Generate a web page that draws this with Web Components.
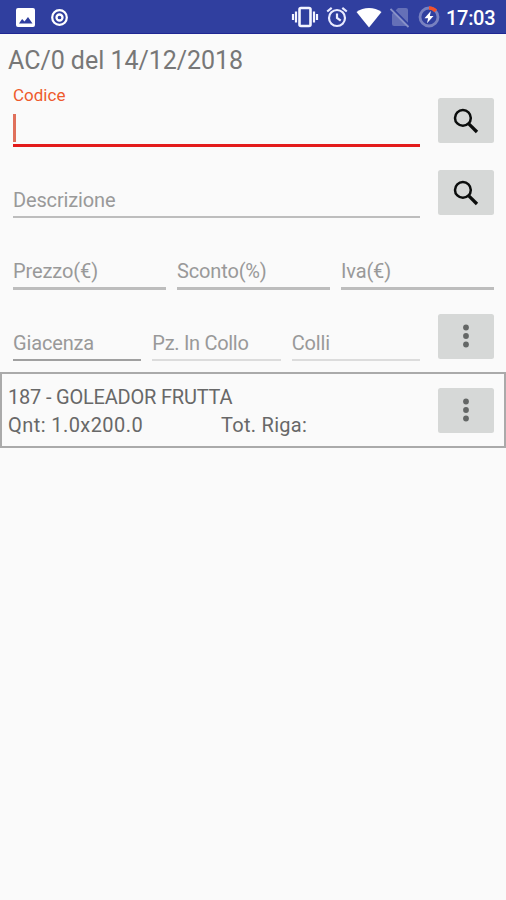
<!DOCTYPE html>
<html lang="it">
<head>
<meta charset="utf-8">
<title>AC/0 del 14/12/2018</title>
<style>
html,body{margin:0;height:100%;background:#fafafa;overflow:hidden}
body{font-family:Roboto,"Liberation Sans",sans-serif}
</style>
</head>
<body>
<order-app></order-app>
<script>
const define = (name, html) => customElements.define(name, class extends HTMLElement {
  constructor() {
    super();
    const t = document.createElement('template');
    t.innerHTML = html;
    this.attachShadow({ mode: 'open' }).append(t.content.cloneNode(true));
  }
});

define('status-bar', `
<style>
:host{display:flex;align-items:center;justify-content:space-between;height:34px;box-sizing:border-box;background:#303f9f;border-bottom:1.5px solid #1f2793;color:#fff;padding:1px 11px 0 15px}
svg{display:block;flex:none}
.l,.r{display:flex;align-items:center}
.l{gap:14px}
time{font-size:20px;font-weight:500;line-height:32px;padding-top:1px;letter-spacing:-.3px;width:49px;white-space:nowrap}
</style>
<div class="l">
 <svg width="21" height="21" viewBox="0 0 21 21"><path fill="#fff" fill-rule="evenodd" d="M3 1h15a2 2 0 0 1 2 2v15a2 2 0 0 1-2 2H3a2 2 0 0 1-2-2V3a2 2 0 0 1 2-2zM4 16.500h13.500l-4.500-6.500-3.500 4.600-2.400-2.500z"/></svg>
 <svg width="19" height="19" viewBox="0 0 19 19"><circle cx="9.500" cy="9.500" r="7.300" fill="none" stroke="#fff" stroke-width="2.200"/><circle cx="9.500" cy="9.500" r="3" fill="none" stroke="#fff" stroke-width="2.300"/></svg>
</div>
<div class="r">
 <svg width="28" height="22" viewBox="0 0 28 22" fill="none" stroke="#f4f5ff" stroke-width="2"><rect x="8.500" y="2" width="11" height="18" rx="1.500" stroke-width="2.600"/><path d="M5 5.500v11M2 8v6M23 5.500v11M26 8v6" stroke-width="2.200"/></svg>
 <svg style="margin-left:7px" width="22" height="22" viewBox="0 0 22 22" fill="none" stroke="#e9ebff" stroke-width="2.200"><circle cx="11" cy="12" r="8"/><path d="M11 7.500V12l3.700 2.700M1.200 5.500 5.700 1.800M20.800 5.500l-4.500-3.700"/></svg>
 <svg style="margin-left:8px" width="26" height="21" viewBox="0 0 26 21"><path fill="#fff" d="M.5 5C7.500-.2 18.500-.2 25.500 5L13 20.500z"/></svg>
 <svg style="margin-left:8px" width="20" height="22" viewBox="0 0 20 22"><path fill="#6570b7" d="M8 2h8a2 2 0 0 1 2 2v16H4a2 2 0 0 1-2-2V8z"/><path d="M1.500 2 19.500 20" stroke="#303f9f" stroke-width="2.500"/><path d="M.5 3 18.500 21" stroke="#8992c8" stroke-width="1.800"/></svg>
 <svg style="margin-left:8px" width="22" height="22" viewBox="0 0 22 22"><circle cx="11" cy="11" r="9" fill="none" stroke="#7881c0" stroke-width="2.800"/><path d="M11 2a9 9 0 0 1 6.800 3" fill="none" stroke="#f4512c" stroke-width="3.600"/><path fill="#fff" d="M12.800 5 6.500 12.200h3.600L9 17.200l6.500-7.300h-3.600z"/></svg>
 <time style="margin-left:6px">17:03</time>
</div>`);

define('icon-button', `
<style>
:host{display:flex;align-items:center;justify-content:center;flex:none;width:56px;height:45px;border-radius:2.500px;background:#d6d8d7}
</style><slot></slot>`);

define('search-icon', `
<style>:host{display:block;width:26px;height:26px}svg{display:block}</style>
<svg width="26" height="26" viewBox="0 0 26 26" fill="none" stroke="#0b0d0c"><circle cx="9.900" cy="9.900" r="7.900" stroke-width="2.500"/><path d="M15.800 15.800 24 24" stroke-width="3.300"/></svg>`);

define('more-icon', `
<style>:host{display:block;width:8px;height:24px}svg{display:block}</style>
<svg width="8" height="24" viewBox="0 0 8 24" fill="#646766"><circle cx="4" cy="3.500" r="2.900"/><circle cx="4" cy="12" r="2.900"/><circle cx="4" cy="20.500" r="2.900"/></svg>`);

define('text-field', `
<style>
:host{display:flex;flex-direction:column;justify-content:flex-end;flex:1;min-width:0;height:71px;color:#999}
.t{font-size:20px;line-height:24px;padding-bottom:4px;white-space:nowrap;letter-spacing:var(--track,-.15px)}
.u{height:var(--line,2.500px);background:var(--rule,#bdbdbd)}
.cursor{display:none;width:2.500px;height:28px;background:#e0705b;margin-bottom:2px}
:host([active]) .t{font-size:17px;line-height:20px;color:#ee5a2d;padding-bottom:9px;letter-spacing:var(--track,0)}
:host([active]) .cursor{display:block}
:host([active]) .u{background:#e31b1b}
</style>
<div class="t"><slot></slot></div><div class="cursor"></div><div class="u"></div>`);

define('form-row', `
<style>
:host{display:flex;align-items:flex-end;gap:18px;padding:0 12px 0 13px;height:71.500px;box-sizing:border-box}
.f{display:flex;flex:1;gap:11px}
::slotted(icon-button){margin-bottom:var(--lift,3px)}
</style><div class="f"><slot></slot></div><slot name="action"></slot>`);

define('order-line', `
<style>
:host{display:flex;align-items:center;justify-content:space-between;box-sizing:border-box;height:76px;margin-top:11px;padding:0 10px 0 6px;border:2px solid #aaa;color:#686868;font-size:20px;line-height:28px;white-space:nowrap}
.text{padding-top:2px}
.row{display:flex}
.name{letter-spacing:-.2px}
.q{width:213px;letter-spacing:.43px}
.t{letter-spacing:.28px}
</style>
<div class="text"><div class="name"><slot name="name"></slot></div><div class="row"><div class="q"><slot name="qty"></slot></div><div class="t"><slot name="total"></slot></div></div></div><slot></slot>`);

define('order-app', `
<style>
:host{display:block;width:506px;height:900px;background:#fafafa}
h1{margin:0;height:41px;padding:11px 8px 0;box-sizing:border-box;font-size:25px;line-height:32px;font-weight:400;color:#777;white-space:nowrap;letter-spacing:-.03px}
</style>
<status-bar></status-bar>
<h1>AC/0 del 14/12/2018</h1>
<form-row style="--lift:3.500px"><text-field active>Codice</text-field><icon-button slot="action"><search-icon></search-icon></icon-button></form-row>
<form-row><text-field>Descrizione</text-field><icon-button slot="action"><search-icon></search-icon></icon-button></form-row>
<form-row><text-field style="--track:-.1px">Prezzo(€)</text-field><text-field>Sconto(%)</text-field><text-field>Iva(€)</text-field></form-row>
<form-row style="--lift:2.500px"><text-field style="--rule:#a0a0a0;--line:2px">Giacenza</text-field><text-field style="--rule:#dcdcdc;--line:2px;--track:-.3px">Pz. In Collo</text-field><text-field style="--rule:#dcdcdc;--line:2px">Colli</text-field><icon-button slot="action"><more-icon></more-icon></icon-button></form-row>
<order-line><span slot="name">187 - GOLEADOR FRUTTA</span><span slot="qty">Qnt: 1.0x200.0</span><span slot="total">Tot. Riga:</span><icon-button><more-icon></more-icon></icon-button></order-line>`);
</script>
</body>
</html>
